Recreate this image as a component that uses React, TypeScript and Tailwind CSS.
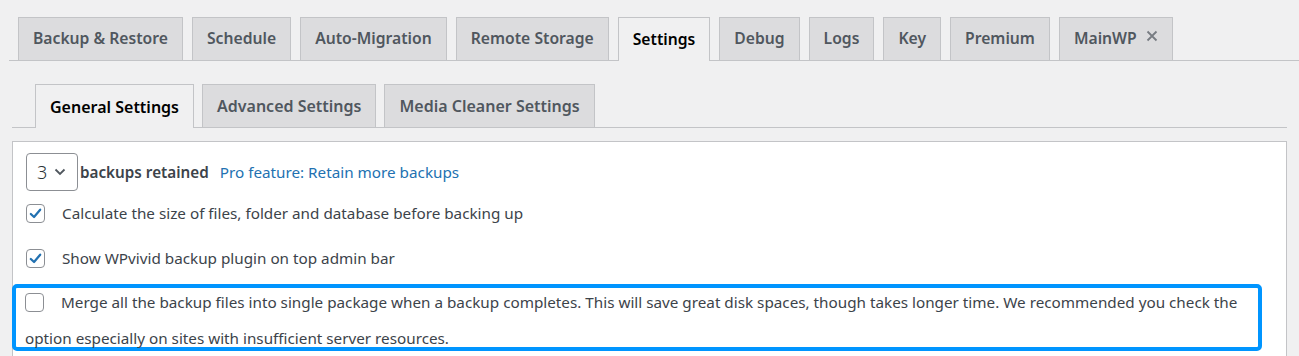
import React from 'react'

const font = { fontFamily: '"Noto Sans", "Open Sans", sans-serif' }

const mainTabs = [
  'Backup & Restore',
  'Schedule',
  'Auto-Migration',
  'Remote Storage',
  'Settings',
  'Debug',
  'Logs',
  'Key',
  'Premium',
  'MainWP',
]

const subTabs = ['General Settings', 'Advanced Settings', 'Media Cleaner Settings']

function Check({ checked }: { checked?: boolean }) {
  return (
    <span className="inline-flex h-[19px] w-[19px] shrink-0 items-center justify-center rounded-[4px] border border-[#8c8f94] bg-white align-[-4px]">
      {checked && (
        <svg viewBox="0 0 20 20" className="h-[17px] w-[17px]">
          <path d="M4.5 10.5 L8.3 14.2 L15.5 5.5" fill="none" stroke="#2271b1" strokeWidth="2.6" strokeLinecap="round" strokeLinejoin="round" />
        </svg>
      )}
    </span>
  )
}

export default function App() {
  return (
    <div className="h-[356px] w-[1299px] overflow-hidden bg-[#f0f0f1] text-[#3c434a]" style={font}>
      {/* main tabs */}
      <div className="ml-[9px] flex gap-[9px] border-b border-[#c3c4c7] pl-[9px] pt-[17px]">
        {mainTabs.map((t) => {
          const active = t === 'Settings'
          return (
            <div
              key={t}
              className={
                'flex h-[43px] items-center gap-[9px] border border-b-0 border-[#c3c4c7] px-[14px] text-[15.7px] font-semibold ' +
                (active ? '-mb-px h-[44px] bg-[#f0f0f1] text-black' : 'bg-[#dcdcde] text-[#50575e]')
              }
            >
              {t}
              {t === 'MainWP' && (
                <svg viewBox="0 0 12 12" className="-mt-[6px] h-[12px] w-[12px]">
                  <path d="M1.5 1.5 L10.5 10.5 M10.5 1.5 L1.5 10.5" stroke="#787c82" strokeWidth="1.8" />
                </svg>
              )}
            </div>
          )
        })}
      </div>

      {/* sub tabs */}
      <div className="mx-[12px] mt-[23px] flex gap-[8px] border-b border-[#c3c4c7] pl-[23px]">
        {subTabs.map((t, i) => (
          <div
            key={t}
            className={
              'flex h-[43px] items-center border border-b-0 border-[#c3c4c7] px-[14px] text-[16px] font-semibold ' +
              (i === 0 ? '-mb-px h-[44px] bg-[#f0f0f1] text-black' : 'bg-[#dcdcde] text-[#50575e]')
            }
          >
            {t}
          </div>
        ))}
      </div>

      {/* content */}
      <div className="mx-[12px] mt-[13px] border border-[#c3c4c7] bg-white pb-4 text-[15.25px]">
        <div className="flex items-center pl-[13px] pt-[11px]">
          <div className="flex h-[38px] w-[52px] items-center gap-[7px] rounded-[4px] border border-[#8c8f94] pl-[10px] text-[18px] font-light text-[#2c3338]">
            3
            <svg viewBox="0 0 12 8" className="h-[8px] w-[12px]">
              <path d="M1.5 1.5 L6 6 L10.5 1.5" fill="none" stroke="#50575e" strokeWidth="1.8" />
            </svg>
          </div>
          <span className="ml-[2px] font-semibold">backups retained</span>
          <span className="ml-[11px] text-[#2271b1]">Pro feature: Retain more backups</span>
        </div>

        <div className="mt-[11px] flex items-center gap-[17px] pl-[13px]">
          <Check checked />
          <span>Calculate the size of files, folder and database before backing up</span>
        </div>

        <div className="mt-[22px] flex items-center gap-[17px] pl-[13px]">
          <Check checked />
          <span>Show WPvivid backup plugin on top admin bar</span>
        </div>

        <div className="mt-[14px] mr-[24px] -ml-px h-[67px] rounded-[5px] border-[4px] border-[#0095ff] pl-[9px] pr-[14px] leading-[36px]">
          <div className="-mt-[4px]">
            <Check />
            <span className="ml-[17px]">
              Merge all the backup files into single package when a backup completes. This will save great disk spaces, though takes longer time. We recommended you check the option especially on sites with insufficient server resources.
            </span>
          </div>
        </div>
      </div>
    </div>
  )
}
